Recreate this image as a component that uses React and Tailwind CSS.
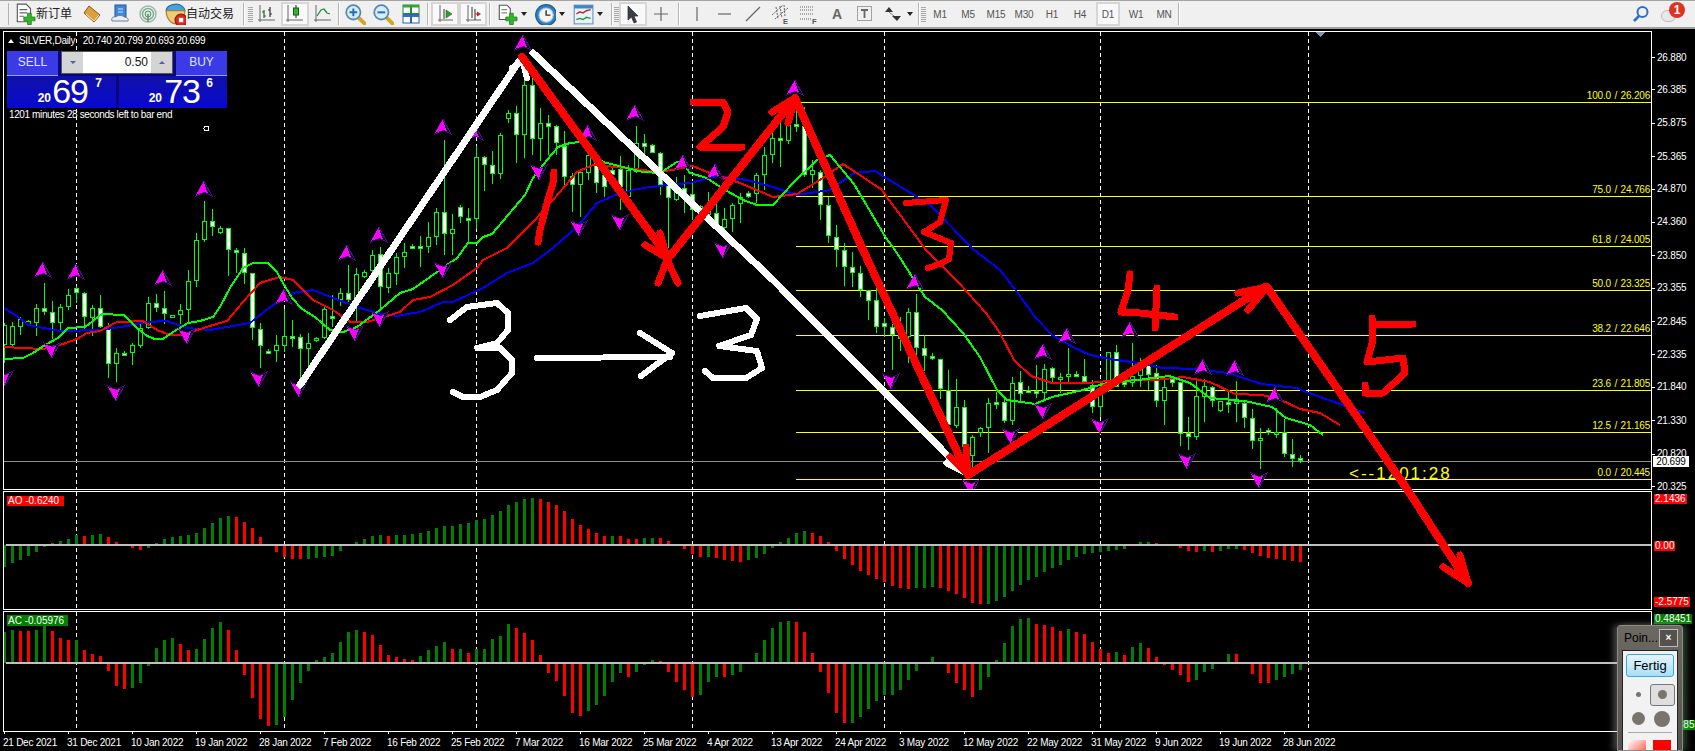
import React from "react";

/* ---------- price data, read as screen rows of the chart ---------- */
const scale = (y0, rows) => rows.map(([t, a, b, l, f]) => [y0 + t / 3, y0 + a / 3, y0 + b / 3, y0 + l / 3, f]);

const CANDLES = [
  ...scale(190, [
    [400,405,465,520,0],[395,408,465,470,0],[380,388,412,435,0],[390,392,405,408,0],[343,355,398,437,0],[280,355,365,375,1],
    [333,365,400,447,1],[343,352,400,425,0],[297,316,352,360,0],[287,295,310,340,1],[307,310,382,420,1],[345,355,383,437,0],
    [316,355,410,415,1],[400,415,523,563,1],[475,490,523,575,0],[483,488,494,498,1],[460,466,490,524,0],[403,415,468,473,0],
    [322,340,415,418,0],[312,340,355,367,1],[303,355,373,403,1],[376,376,382,382,0],[343,361,376,403,0],[240,274,361,398,0],
    [130,151,274,290,0],[34,94,151,155,0],[58,94,112,137,1],[109,115,130,133,0],[115,115,181,257,1],[175,181,190,250,1],
    [175,190,250,283,1],[250,250,415,450,1],[400,418,469,533,1],[477,482,488,491,1],[435,466,484,515,0],[358,439,469,485,0],
    [390,437,441,470,1],[433,440,478,565,1],[430,460,478,560,0],[442,445,451,455,0],[350,358,445,448,0],
  ]),
  ...scale(100, [
    [585,648,652,680,1],[565,580,600,618,0],[495,580,600,605,1],[503,523,605,670,0],[510,515,530,535,0],[450,465,512,520,0],
    [440,463,562,625,1],[505,520,563,580,0],[460,472,523,555,0],[430,455,472,503,0],[432,437,443,448,1],[408,438,442,500,1],
    [365,412,440,458,0],[325,335,412,435,0],
  ]),
  ...scale(40, [
    [300,515,583,645,1],[522,568,583,645,0],[495,502,530,548,1],[505,533,538,605,1],[317,352,538,568,0],[347,352,375,452,1],
    [332,375,403,432,1],[280,286,403,417,0],[210,220,238,250,0],[198,220,286,368,1],[110,135,286,355,0],[110,135,298,345,1],
    [205,250,298,363,0],[225,250,260,345,1],[255,258,310,345,1],[273,318,410,435,1],[398,408,436,515,1],[390,395,436,530,0],
    [340,345,398,420,0],[335,370,430,458,1],[370,405,442,470,1],[380,390,405,445,1],[348,388,442,510,1],[375,390,472,480,0],
    [258,310,395,400,0],[282,310,322,345,1],[312,316,338,340,1],[335,338,435,465,1],[430,435,475,625,1],[410,445,480,482,0],
    [405,445,475,520,1],[430,463,510,540,1],[495,497,503,530,0],[455,500,525,540,0],[490,518,565,570,1],[505,538,563,575,0],
    [490,495,538,575,0],[460,470,493,548,0],[452,460,470,475,1],[400,406,462,490,0],[320,345,406,450,0],[280,293,345,370,0],
    [250,293,297,380,1],[240,255,303,312,0],[210,252,258,275,1],[200,258,405,410,1],[360,390,405,445,0],[390,395,495,540,1],
    [470,495,588,610,1],
  ]),
  ...scale(250, [
    [-75,-40,0,50,1],[-20,0,52,107,1],[5,52,68,110,1],[48,68,120,140,1],[120,120,152,210,1],[100,150,230,248,1],
    [205,218,230,260,1],[222,230,256,360,1],[200,258,265,303,1],[175,187,262,340,0],[133,187,295,315,1],[255,293,318,362,1],
    [310,317,328,330,1],[328,328,418,447,1],[360,420,525,530,1],[388,472,527,535,0],[450,472,590,620,1],[555,562,617,650,0],
    [530,535,548,560,0],[445,460,535,610,0],[425,455,460,478,1],[445,455,512,520,1],[380,400,512,525,0],[363,397,433,460,1],
    [408,419,425,430,1],[345,422,430,445,1],[343,358,430,450,0],[352,355,385,400,1],[368,380,385,430,0],[295,371,380,395,0],
    [362,371,375,380,1],[328,377,397,400,1],[390,405,472,490,1],[400,420,470,500,0],
    [305,307,420,425,0],[285,307,410,412,1],[385,395,405,410,1],[280,377,400,412,0],[325,335,377,410,0],[335,345,375,420,1],
    [345,370,452,470,1],[385,412,452,525,0],[380,388,400,410,1],[395,397,553,587,1],[502,550,560,600,1],[388,438,560,570,0],
    [388,408,440,515,0],[408,410,452,470,1],[452,452,482,485,0],[420,455,460,488,1],[393,454,460,516,0],[455,460,505,535,1],
    [477,503,574,597,1],[535,565,574,657,0],[535,541,550,555,1],[475,545,550,565,0],[507,545,613,620,1],[568,613,627,650,1],
    [615,625,634,640,1],
  ]),
];

const GREEN = [[4,359],[23,358],[33,353],[45,345],[58,338],[68,328],[85,327],[102,314],[124,315],[137,328],[147,336],[155,339],[163,339],[173,332],[188,323],[200,321],[213,317],[220,307],[230,288],[243,268],[253,263],[268,263],[277,272],[283,283],[292,298],[302,309],[315,317],[330,330],[343,332],[357,327],[380,310],[400,293],[413,289],[440,270],[457,258],[468,243],[477,243],[483,237],[492,234],[525,195],[533,178],[547,160],[558,147],[570,143],[580,142],[597,157],[603,162],[643,172],[660,173],[677,162],[683,163],[690,173],[707,178],[720,187],[743,200],[757,205],[773,205],[793,183],[817,160],[830,155],[854,184],[886,238],[895,250],[911,275],[925,297],[942,310],[963,333],[980,357],[997,390],[1007,400],[1035,404],[1052,397],[1083,390],[1110,382],[1138,380],[1169,376],[1190,383],[1210,398],[1245,401],[1272,407],[1286,418],[1300,422],[1310,425],[1323,435]];
const RED = [[4,347],[23,348],[43,349],[63,344],[77,339],[87,333],[100,331],[117,322],[143,321],[157,330],[170,335],[183,335],[197,330],[213,325],[227,321],[243,302],[260,283],[280,277],[293,280],[313,300],[333,310],[350,322],[367,322],[400,312],[413,300],[430,297],[453,285],[477,268],[483,260],[507,248],[533,222],[553,200],[577,172],[593,165],[617,167],[660,172],[693,166],[707,172],[740,183],[773,197],[797,194],[820,180],[843,164],[881,189],[926,250],[959,283],[986,313],[1000,333],[1014,360],[1031,376],[1052,383],[1090,383],[1107,381],[1131,380],[1155,380],[1183,377],[1210,382],[1235,394],[1262,395],[1279,399],[1300,409],[1320,413],[1340,425]];
const BLUE = [[4,308],[17,316],[28,325],[60,331],[100,330],[127,326],[147,322],[167,321],[187,328],[210,330],[250,323],[270,307],[293,293],[313,290],[333,298],[360,308],[377,313],[397,316],[420,312],[443,302],[453,302],[483,288],[507,273],[533,263],[553,248],[577,227],[597,203],[620,193],[643,188],[667,185],[690,183],[717,176],[747,180],[773,187],[797,195],[830,190],[854,173],[875,171],[930,205],[973,249],[1000,270],[1017,292],[1035,317],[1052,335],[1073,347],[1090,355],[1110,359],[1138,363],[1162,368],[1197,369],[1228,373],[1262,384],[1296,388],[1320,397],[1337,403],[1365,413]];

const ARROWS_UP = [[43,270],[76,272],[163,278],[204,189],[284,297],[347,253],[379,235],[443,127],[475,133],[523,43],[588,133],[635,113],[683,163],[715,172],[795,88],[915,282],[1067,336],[1043,352],[1130,330],[1203,367],[1235,368],[1275,395]];
const ARROWS_DOWN = [[5,378],[52,350],[116,393],[187,336],[259,379],[299,389],[355,333],[380,319],[443,270],[539,172],[579,228],[620,222],[723,250],[891,381],[1043,411],[1011,436],[1100,426],[1187,461],[1259,480],[971,487]];

const FIBS = [["100.0", "26.206"],["75.0", "24.766"],["61.8", "24.005"],["50.0", "23.325"],["38.2", "22.646"],["23.6", "21.805"],["12.5", "21.165"],["0.0", "20.445"]];
const PRICE_TICKS = ["26.880","26.385","25.875","25.365","24.870","24.360","23.850","23.355","22.845","22.335","21.840","21.330","20.820","20.325"];
const priceY = (p) => 57.5 + (26.88 - parseFloat(p)) * 65.45;
const SEPARATORS = [76, 284, 476, 692, 884, 1100, 1308];
const DATES = ["21 Dec 2021","31 Dec 2021","10 Jan 2022","19 Jan 2022","28 Jan 2022","7 Feb 2022","16 Feb 2022","25 Feb 2022","7 Mar 2022","16 Mar 2022","25 Mar 2022","4 Apr 2022","13 Apr 2022","24 Apr 2022","3 May 2022","12 May 2022","22 May 2022","31 May 2022","9 Jun 2022","19 Jun 2022","28 Jun 2022"];

const AO = "-66g -55g -46g -34g -22g -6g 5g 11g 17g 29g 26r 29g 32g 23r 8r 0g -10r -15r -9g 5g 17g 23g 26g 29g 35g 50g 65g 80g 86g 83r 68r 50r 23r 0g -22r -37r -43r -43r -43g -40g -37g -34g -19g 0g 8g 17g 26g 29g 26r 29g 29g 32g 35g 41g 50g 56g 56g 62g 65g 74g 77g 89g 101g 119g 128g 137g 140g 137r 128r 119r 101r 77r 59r 47r 35r 26r 26g 26r 17r 17r 20g 20g 20r 11r 0g -12r -26r -36r -36g -39r -45r -48r -51r -45g -39g -27g -9g 8g 20g 35g 41g 35r 26r 8r -18r -42r -60r -78r -90r -102r -111r -123r -128r -132r -128g -128g -127g -129r -138r -147r -159r -174r -177r -177g -168g -156g -138g -120g -105g -96g -81g -69g -60g -45g -36g -27g -24g -21g -18g -15g -12g 0g 8g 8g 5r 0g 0g -9r -18r -21r -18g -21r -18g -12g -12g -15r -24r -33r -39r -42r -45r -48r -51r".split(" ");
const AC = "92g 98g 95r 95r 98g 110g 95r 74r 68r 68g 38r 26r 20r -24r -69r -78r -75g -60g -9g 44g 68g 74g 56r 38r 41g 71g 104g 122g 98r 38r -36r -105r -168r -189r -186g -162g -111g -60g -24g 8g 17g 29g 62g 92g 98g 92r 83r 53r 23r 17r 11r 8r 20g 38g 50g 62g 41r 41g 29r 41g 41g 71g 80g 116g 104r 89r 68r 23r -30r -54r -99r -150r -159r -144g -126g -99g -57g -30g -42r -27g -6g 8g 5r -27r -57r -81r -102r -96g -57g -42g -42r -36g -27g 0g 29g 68g 104g 122g 125g 122r 92r 29r -27r -90r -150r -180r -180g -162g -138g -114g -96g -96g -81g -51g -24g 0g 17g 0g -30r -60r -81r -102r -81g -42g 8g 59g 110g 131g 134g 116r 113r 107r 95r 101g 92r 86r 62r 41r 29r 32g 23r 47g 59g 44r 17r -6r -21r -36r -57r -51g -27g -18g 0g 26g 26r 0g -33r -60r -60r -51g -42g -33g -21g".split(" ");

const barX = (i) => 4.5 + 8 * i;
const pointsOf = (list) => list.map(([x, y]) => `${x},${y}`).join(" ");

/* ---------- toolbar pieces ---------- */
const Sep = ({ cls = "mx-[1px]" }) => <div className={`w-[2px] h-[22px] bg-[#b4b4b4] border-r border-white shrink-0 ${cls}`} />;
const Grip = () => (
  <div className="flex flex-col gap-[1px] w-[6px] h-[22px] shrink-0 justify-center items-center">
    {Array.from({ length: 8 }, (_, i) => <div key={i} className="w-[5px] h-[1px] bg-[#a8a8a8]" />)}
  </div>
);
const Slot = ({ children, on, w = "w-[28px]" }) => (
  <div className={`${w} h-[24px] shrink-0 flex items-center justify-center ${on ? "bg-[#f9f9f9] border-2 border-[#d6d6d6]" : ""}`}>{children}</div>
);
const Caret = ({ w = "w-[10px]" }) => (
  <div className={`${w} h-[24px] shrink-0 flex items-center justify-start`}>
    <div className="w-0 h-0 border-x-[3px] border-t-[4px] border-x-transparent border-t-[#222]" />
  </div>
);
const Tf = ({ label, on }) => (
  <Slot on={on} w={on ? "w-[24px] mx-[2px]" : "w-[28px]"}><span className="text-[10px] text-[#555] tracking-[-0.2px]">{label}</span></Slot>
);
const Ic = ({ children, s = 20 }) => <svg width={s} height={s} viewBox="0 0 20 20" fill="none">{children}</svg>;

const PlusGreen = ({ x = 7, y = 8 }) => (
  <path d={`M${x + 4} ${y}h4v4h4v4h-4v4h-4v-4h-4v-4h4z`} fill="#35b52f" stroke="#1b7a1a" strokeWidth="0.8" />
);
const NewOrderIcon = () => (
  <Ic s={22}>
    <path d="M3 1h8l4 4v12H3z" fill="#fff" stroke="#555" />
    <path d="M5 6h7M5 9h7M5 12h4" stroke="#666" />
    <g transform="scale(0.85) translate(3.5 3)"><PlusGreen /></g>
  </Ic>
);
const BookIcon = () => (
  <Ic><path d="M7 2l11 9-6 7L2 9z" fill="#dca03c" stroke="#8a5a16" /><path d="M4 10l8 7 5-6" stroke="#fce8b0" /></Ic>
);
const LibraryIcon = () => (
  <Ic>
    <rect x="5" y="1" width="11" height="12" fill="#3f87d8" stroke="#23558f" />
    <path d="M8 5h5M8 8h5" stroke="#cfe5ff" />
    <path d="M2 17c-1-3 1-5 4-4 1-2 7-2 8 0 3 0 5 2 4 4z" fill="#e6eef6" stroke="#6d8199" />
  </Ic>
);
const SignalIcon = () => (
  <Ic>
    <circle cx="10" cy="10" r="8" stroke="#9fb8a8" strokeWidth="1.5" />
    <circle cx="10" cy="10" r="5.5" stroke="#7fb08e" strokeWidth="1.5" />
    <circle cx="10" cy="10" r="3" fill="#c9e7d2" stroke="#4b9a68" />
    <path d="M10 10v8" stroke="#708078" strokeWidth="1.5" />
  </Ic>
);
const AutoIcon = () => (
  <Ic s={22}>
    <path d="M2 7c0-4 5-6 9-6s8 3 8 6z" fill="#4aa0d8" stroke="#2a6f9e" />
    <path d="M2 7h17c0 7-3 12-8 12S2 14 2 7z" fill="#f0cc70" stroke="#a88030" />
    <circle cx="15.5" cy="15.5" r="5.5" fill="#d92a1c" stroke="#8d1510" />
    <rect x="13.5" y="13.5" width="4" height="4" fill="#fff" />
  </Ic>
);
const BarsIcon = () => (
  <Ic>
    <path d="M3 1v15h15" stroke="#666" /><path d="M1 16h2M3 18v-2" stroke="#666" />
    <path d="M7 6v8M5 8h2M7 12h2" stroke="#1f6a2a" strokeWidth="1.2" /><path d="M13 3v10M11 6h2M13 10h2" stroke="#333" strokeWidth="1.2" />
  </Ic>
);
const CandleIcon = () => (
  <Ic>
    <path d="M3 1v15h15" stroke="#666" /><path d="M1 16h2M3 18v-2" stroke="#666" />
    <path d="M11 1v13" stroke="#222" /><rect x="8.5" y="4" width="5" height="7" fill="#2fb52f" stroke="#14601c" />
  </Ic>
);
const LineIcon = () => (
  <Ic>
    <path d="M3 1v15h15" stroke="#666" /><path d="M1 16h2M3 18v-2" stroke="#666" />
    <path d="M4 12l4-6 3-1 3 4 3 1" stroke="#1f8a3c" strokeWidth="1.3" />
  </Ic>
);
const ZoomIcon = ({ minus }) => (
  <Ic s={22}>
    <path d="M13 13l6 6" stroke="#d4a520" strokeWidth="3.5" strokeLinecap="round" />
    <circle cx="8.5" cy="8.5" r="6.5" fill="#d6ecfa" stroke="#5a88a8" strokeWidth="1.6" />
    <path d={minus ? "M5 8.5h7" : "M5 8.5h7M8.5 5v7"} stroke="#1e6fc0" strokeWidth="1.8" />
  </Ic>
);
const TileIcon = () => (
  <Ic>
    <rect x="2" y="1" width="7.5" height="8.5" fill="#fff" stroke="#2a8a30" /><rect x="2" y="1" width="7.5" height="2.5" fill="#2fa83a" />
    <rect x="10.5" y="1" width="7.5" height="8.5" fill="#fff" stroke="#2a8a30" /><rect x="10.5" y="1" width="7.5" height="2.5" fill="#2fa83a" />
    <rect x="2" y="10.5" width="7.5" height="8.5" fill="#fff" stroke="#2a60b0" /><rect x="2" y="10.5" width="7.5" height="2.5" fill="#2b6fd0" />
    <rect x="10.5" y="10.5" width="7.5" height="8.5" fill="#fff" stroke="#2a60b0" /><rect x="10.5" y="10.5" width="7.5" height="2.5" fill="#2b6fd0" />
  </Ic>
);
const ScrollIcon = () => (
  <Ic>
    <path d="M5 1v15h13M3 16h2M5 18v-2" stroke="#666" />
    <path d="M9 5v10" stroke="#333" /><path d="M11 6l6 4-6 4z" fill="#2f9f2f" stroke="#1a6a1a" strokeWidth="0.6" />
  </Ic>
);
const ShiftIcon = () => (
  <Ic>
    <path d="M5 1v15h13M3 16h2M5 18v-2" stroke="#666" />
    <path d="M9 3v11M12 5v11" stroke="#333" /><path d="M18 10l-4-2.5v5z" fill="#c22" /><path d="M14 10h-2" stroke="#c22" />
  </Ic>
);
const TemplateIcon = () => (
  <Ic s={22}>
    <path d="M3 2h7l3 3v10H3z" fill="#fff" stroke="#555" /><path d="M5 6h5M5 9h5" stroke="#888" />
    <g transform="scale(0.85) translate(3.5 3)"><PlusGreen /></g>
  </Ic>
);
const ClockIcon = () => (
  <Ic s={22}>
    <circle cx="11" cy="11" r="9.5" fill="#2d7fc8" stroke="#1a5a92" />
    <circle cx="11" cy="11" r="6.5" fill="#f6f6ee" stroke="#9fc4e4" />
    <path d="M11 6.5V11h4" stroke="#333" strokeWidth="1.3" />
  </Ic>
);
const IndicatorIcon = () => (
  <Ic s={22}>
    <rect x="2" y="2" width="17" height="17" fill="#eaf3fb" stroke="#6a92b8" /><rect x="2" y="2" width="17" height="3" fill="#3d86cc" />
    <path d="M4 10l3-2 3 1 3-2 4-1" stroke="#c92a20" strokeWidth="1.3" /><path d="M4 15l3-1 3 1 3-2 4 1" stroke="#2a9a3a" strokeWidth="1.3" />
  </Ic>
);
const CursorIcon = () => <Ic><path d="M5 2v14l3.5-3 2.5 6 2.5-1-2.5-6H15z" fill="#3a3f45" stroke="#2a2d30" strokeWidth="0.7" /></Ic>;
const Gray = ({ d }) => <Ic><path d={d} stroke="#666" strokeWidth="1.2" /></Ic>;
const ChannelIcon = () => (
  <Ic>
    <path d="M1 11l11-10M4 15l13-11M5 3l2 12M9 2l2 12M13 1l1 11" stroke="#666" strokeWidth="1" strokeDasharray="2 1" />
    <text x="12" y="19.5" fontSize="7.5" fontWeight="700" fill="#555">E</text>
  </Ic>
);
const FiboIcon = () => (
  <Ic>
    <path d="M1 3h13M1 6h13M1 10h13M1 15h11" stroke="#666" strokeDasharray="1 1" />
    <text x="13" y="19.5" fontSize="7.5" fontWeight="700" fill="#555">F</text>
  </Ic>
);
const TextLabelIcon = () => (
  <Ic>
    <rect x="2.5" y="2.5" width="14" height="14" stroke="#555" strokeDasharray="1 1" />
    <path d="M6 6h7M9.5 6v8" stroke="#666" strokeWidth="1.8" />
  </Ic>
);
const ArrowsIcon = () => (
  <Ic>
    <path d="M2 8l4-5 4 5z" fill="#333" /><path d="M9 12l5 5 4-5z" fill="#333" /><path d="M6 8l5 4" stroke="#777" />
  </Ic>
);

function Toolbar() {
  return (
    <div className="h-[29px] shrink-0 bg-[#f0f0f0] border-t border-[#a4a4a4] border-b-2 border-b-[#a0a0a0] flex items-center pl-[8px] text-[#222]">
      <div className="w-[1px] h-[22px] bg-[#b4b4b4] shrink-0" />
      <div className="w-[69px] shrink-0 flex items-center pl-[5px]"><NewOrderIcon /><span className="text-[12px]">新订单</span></div>
      <Slot><BookIcon /></Slot><Slot><LibraryIcon /></Slot><Slot><SignalIcon /></Slot>
      <div className="w-[78px] shrink-0 flex items-center pl-[2px]"><AutoIcon /><span className="text-[12px]">自动交易</span></div>
      <Sep cls="ml-[3px] mr-[2px]" /><Grip />
      <Slot><BarsIcon /></Slot><Slot on><CandleIcon /></Slot><Slot><LineIcon /></Slot>
      <Sep cls="mx-[1px]" />
      <Slot><ZoomIcon /></Slot><Slot><ZoomIcon minus /></Slot><Slot><TileIcon /></Slot>
      <Sep cls="mx-[2px]" />
      <Slot on><ScrollIcon /></Slot><Slot on><ShiftIcon /></Slot>
      <Sep cls="mx-[2px]" />
      <Slot><TemplateIcon /></Slot><Caret /><Slot><ClockIcon /></Slot><Caret /><Slot><IndicatorIcon /></Slot><Caret />
      <Sep cls="ml-[4px] mr-[0px]" /><Grip />
      <Slot on><CursorIcon /></Slot><Slot><Gray d="M10 3v14M3 10h14" /></Slot>
      <Sep cls="mx-[3px]" />
      <Slot><Gray d="M10 3v14" /></Slot><Slot><Gray d="M3 10h13" /></Slot><Slot><Gray d="M3 17L17 3" /></Slot>
      <Slot><ChannelIcon /></Slot><Slot><FiboIcon /></Slot>
      <Slot><span className="text-[14px] font-bold text-[#666]">A</span></Slot><Slot><TextLabelIcon /></Slot>
      <Slot><ArrowsIcon /></Slot><Caret w="w-[6px]" />
      <Sep cls="ml-[5px] mr-[0px]" /><Grip />
      {["M1","M5","M15","M30","H1","H4"].map((t) => <Tf key={t} label={t} />)}
      <Tf label="D1" on /><Tf label="W1" /><Tf label="MN" />
      <Sep cls="ml-[0px]" />
      <div className="flex-1" />
      <svg width="18" height="18" viewBox="0 0 18 18" fill="none" className="mr-[11px]">
        <circle cx="10.5" cy="7" r="5" stroke="#2a6fc8" strokeWidth="2" /><path d="M7 11l-5 5" stroke="#2a6fc8" strokeWidth="2.6" />
      </svg>
      <div className="relative w-[26px] h-[24px] mr-[8px] shrink-0">
        <div className="absolute left-[0px] top-[8px] w-[15px] h-[12px] rounded-full bg-[#e8e8e8] border border-[#bdbdbd]" />
        <div className="absolute left-[8px] top-[0px] w-[16px] h-[16px] rounded-full bg-[#df3222] text-white text-[12px] font-bold leading-[16px] text-center">1</div>
      </div>
    </div>
  );
}

/* ---------- one-click trading panel ---------- */
function Quote({ big, tail, cls, bigRight }) {
  return (
    <div className={`relative h-[32px] bg-gradient-to-b from-[#1010a8] to-[#0808d0] text-white ${cls}`}>
      <span className="absolute right-[65px] bottom-[4px] text-[12px] font-bold leading-none">20</span>
      <span className={`absolute top-[-2px] text-[34px] leading-[34px] tracking-[-1px] ${bigRight}`}>{big}</span>
      <span className="absolute right-[14px] top-[1px] text-[12px] font-bold leading-none">{tail}</span>
    </div>
  );
}

function TradePanel() {
  return (
    <div className="absolute left-[3px] top-[19px] w-[220px] bg-[#08087c]">
      <div className="flex justify-between">
        <div className="w-[51px] h-[25px] bg-[#3a3ae6] text-[#dfe6ff] text-[12px] text-center leading-[23px] border-b border-[#9aa4f4]">SELL</div>
        <div className="w-[112px] h-[23px] flex bg-white border border-[#555]">
          <div className="w-[21px] bg-[#d4d4d4] flex items-center justify-center"><div className="w-0 h-0 border-x-[3px] border-t-[3px] border-x-transparent border-t-[#5060a8]" /></div>
          <div className="flex-1 text-right pr-[3px] text-[12px] leading-[21px] text-[#111]">0.50</div>
          <div className="w-[21px] bg-[#d4d4d4] flex items-center justify-center"><div className="w-0 h-0 border-x-[3px] border-b-[3px] border-x-transparent border-b-[#5060a8]" /></div>
        </div>
        <div className="w-[51px] h-[25px] bg-[#3a3ae6] text-[#dfe6ff] text-[12px] text-center leading-[23px] border-b border-[#9aa4f4]">BUY</div>
      </div>
      <div className="flex justify-between">
        <Quote big="69" tail="7" cls="w-[109px]" bigRight="right-[28px]" />
        <Quote big="73" tail="6" cls="w-[108px]" bigRight="right-[27px]" />
      </div>
    </div>
  );
}

/* ---------- chart drawing ---------- */
function Separators({ y1, y2 }) {
  return SEPARATORS.map((x) => (
    <line key={x} x1={x + 0.5} x2={x + 0.5} y1={y1} y2={y2} stroke="#fff" strokeDasharray="4 3" />
  ));
}

function Fractal({ x, y, down }) {
  return (
    <g transform={`translate(${x} ${y}) scale(1 ${down ? -1 : 1})`}>
      <polygon points="0,-8 -8,7 0,3 8,7" fill="#000" stroke="#4a0a9a" strokeWidth="1" />
      <polygon points="0,-8 -8,6 0,3 4,4 1,-3" fill="#ff00ff" />
    </g>
  );
}

function MainChart() {
  return (
    <svg className="absolute inset-0 w-full h-full" viewBox="4 32 1647 457" shapeRendering="crispEdges">
      <Separators y1={32} y2={489} />
      {FIBS.map(([k, p]) => {
        const y = Math.round(priceY(p)) + 0.5;
        return <line key={k} x1="796" x2="1651" y1={y} y2={y} stroke="#ffff00" />;
      })}
      <line x1="4" x2="1651" y1="461.5" y2="461.5" stroke="#8a8f96" />
      {CANDLES.map(([t, a, b, l, f], i) => {
        const cx = barX(i);
        const top = Math.round(a);
        const h = Math.max(3, Math.round(b) - top);
        return (
          <g key={i}>
            <rect x={cx - 0.5} y={t} width="1" height={l - t} fill="#00ff00" />
            <rect x={cx - 2.5} y={top} width="5" height={h} fill="#00ff00" />
            <rect x={cx - 1.5} y={top + 1} width="3" height={h - 2} fill={f ? "#fff" : "#000"} />
          </g>
        );
      })}
      <polyline points={pointsOf(BLUE)} fill="none" stroke="#0000ff" strokeWidth="2" />
      <polyline points={pointsOf(RED)} fill="none" stroke="#ff0000" strokeWidth="2" />
      <polyline points={pointsOf(GREEN)} fill="none" stroke="#00ff00" strokeWidth="2" />
      {ARROWS_UP.map(([x, y]) => <Fractal key={`${x}-${y}`} x={x} y={y} />)}
      {ARROWS_DOWN.map(([x, y]) => <Fractal key={`${x}-${y}`} x={x} y={y} down />)}
      <circle cx="206.5" cy="128.5" r="2.5" fill="none" stroke="#fff" />
      <polygon points="1316,32 1325,32 1320.5,37" fill="#8497a8" />
    </svg>
  );
}

function Histogram({ data, zero, top, bottom }) {
  return (
    <svg className="absolute inset-0 w-full h-full" viewBox={`4 ${top} 1647 ${bottom - top}`} shapeRendering="crispEdges">
      <Separators y1={top} y2={bottom} />
      {data.map((tok, i) => {
        const v = parseInt(tok, 10);
        if (!v) return null;
        const h = Math.round(Math.abs(v) / 3);
        return (
          <rect key={i} x={barX(i) - 1.5} y={v > 0 ? zero - h : zero} width="3" height={h}
            fill={tok.endsWith("g") ? "#008000" : "#ff0000"} />
        );
      })}
      <rect x="6" y={zero - 1} width="1645" height="2" fill="#c0c0c0" />
    </svg>
  );
}

/* Hand drawn markup that sits over the whole chart area */
function Pen({ pts, c, w = 6 }) {
  return <polyline points={pointsOf(pts)} fill="none" stroke={c} strokeWidth={w} strokeLinecap="round" strokeLinejoin="round" />;
}

function Markup() {
  const W = "#ffffff";
  const R = "#ff0000";
  return (
    <svg className="absolute left-0 top-0 pointer-events-none" width="1695" height="751" viewBox="0 0 1695 751" shapeRendering="crispEdges">
      <Pen c={W} w={7} pts={[[300,385],[520,60]]} />
      <Pen c={W} w={6} pts={[[512,68],[522,60],[527,78]]} />
      <Pen c={W} w={7} pts={[[533,53],[773,280],[955,463]]} />
      <Pen c={W} w={7} pts={[[947,463],[965,472]]} />
      <Pen c={W} w={6} pts={[[450,320],[467,307],[497,303],[508,313],[508,330],[497,343],[477,348],[500,348],[512,360],[512,373],[497,390],[480,397],[463,397],[453,392]]} />
      <Pen c={W} w={6} pts={[[537,358],[670,357]]} />
      <Pen c={W} w={6} pts={[[640,333],[672,353],[641,376]]} />
      <Pen c={W} w={6} pts={[[700,316],[746,308],[757,319],[751,335],[719,346],[757,351],[762,368],[746,378],[713,378],[705,371]]} />

      <Pen c={R} w={8} pts={[[522,57],[665,253]]} />
      <Pen c={R} w={7} pts={[[645,245],[667,258],[660,233]]} />
      <Pen c={R} w={7} pts={[[667,260],[658,283]]} />
      <Pen c={R} w={7} pts={[[667,260],[678,283]]} />
      <Pen c={R} w={8} pts={[[667,260],[795,98]]} />
      <Pen c={R} w={7} pts={[[772,112],[795,98],[788,123]]} />
      <Pen c={R} w={8} pts={[[795,98],[863,250],[968,475]]} />
      <Pen c={R} w={7} pts={[[950,457],[968,475],[966,447]]} />
      <Pen c={R} w={8} pts={[[968,475],[1265,287]]} />
      <Pen c={R} w={7} pts={[[1238,293],[1267,287],[1248,310]]} />
      <Pen c={R} w={8} pts={[[1267,287],[1407,489],[1468,583]]} />
      <Pen c={R} w={7} pts={[[1443,567],[1468,583],[1460,555]]} />

      <Pen c={R} w={7} pts={[[554,172],[553,183],[547,203],[540,230],[538,242]]} />
      <Pen c={R} w={7} pts={[[693,102],[723,102],[728,112],[723,127],[700,147],[742,147]]} />
      <Pen c={R} w={6} pts={[[906,203],[946,200],[940,222],[924,232],[951,243],[949,259],[942,263],[928,268]]} />
      <Pen c={R} w={7} pts={[[1130,274],[1128,290],[1121,312],[1140,313],[1175,317]]} />
      <Pen c={R} w={7} pts={[[1157,288],[1155,328]]} />
      <Pen c={R} w={7} pts={[[1413,324],[1372,325],[1372,318],[1373,340],[1367,362],[1403,358],[1405,373],[1383,393],[1365,393],[1365,385]]} />
    </svg>
  );
}

/* ---------- panes ---------- */
const Pane = ({ cls, children }) => (
  <div className={`relative w-[1649px] border border-white bg-black overflow-hidden shrink-0 ${cls}`}>{children}</div>
);
const AxisBadge = ({ cls, children }) => (
  <div className={`absolute h-[10px] leading-[10px] px-[1px] text-[10px] text-white ${cls}`}>{children}</div>
);
const PaneRow = ({ children, axis, cls }) => (
  <div className={`flex pl-[3px] shrink-0 ${cls}`}>
    {children}
    <div className="relative flex-1">{axis}</div>
  </div>
);

function PointDialog() {
  return (
    <div className="absolute left-[1617px] top-[625px] w-[66px] h-[126px] overflow-hidden rounded-t-[3px] bg-gradient-to-b from-[#6c6963] to-[#55524d] border border-[#8c8a85] shadow-[-4px_0_6px_rgba(190,190,190,0.35),4px_0_6px_rgba(140,200,140,0.3)]">
      <div className="flex items-center h-[24px] pl-[6px]">
        <span className="flex-1 text-[12px] text-black">Poin...</span>
        <div className="w-[19px] h-[18px] mr-[4px] border border-[#bbb] bg-[#55524d] text-white text-[10px] leading-[15px] text-center font-bold">×</div>
      </div>
      <div className="mx-[4px] h-[110px] bg-[#f2f2f2] border border-[#222] pt-[3px]">
        <div className="mx-[3px] h-[23px] rounded-[3px] border border-[#38a9e0] bg-gradient-to-b from-[#e6f6fd] to-[#a8def6] text-[13px] leading-[21px] text-center text-black">Fertig</div>
        <div className="grid grid-cols-2 mt-[4px] mx-[3px] h-[48px] items-center justify-items-center">
          <div className="w-[5px] h-[5px] rounded-full bg-[#7a756c]" />
          <div className="w-[25px] h-[22px] rounded-[3px] border border-[#777] bg-[#dedede] flex items-center justify-center"><div className="w-[9px] h-[9px] rounded-full bg-[#7a756c]" /></div>
          <div className="w-[13px] h-[13px] rounded-full bg-[#7a756c]" />
          <div className="w-[16px] h-[16px] rounded-full bg-[#7a756c]" />
        </div>
        <div className="mx-[5px] mt-[3px] h-[1px] bg-[#aaa]" />
        <div className="flex gap-[7px] ml-[5px] mt-[7px]">
          <div className="w-[18px] h-[14px] bg-gradient-to-br from-[#ffffff] to-[#ff4040]" />
          <div className="w-[18px] h-[14px] bg-[#ff0000]" />
        </div>
      </div>
    </div>
  );
}

export default function App() {
  return (
    <div className="relative w-[1695px] h-[751px] bg-black overflow-hidden flex flex-col font-['Liberation_Sans','Noto_Sans_CJK_SC',sans-serif]">
      <Toolbar />
      <div className="h-[2px] shrink-0" />
      <PaneRow
        axis={
          <>
            {PRICE_TICKS.map((p) => (
              <div key={p} className="absolute left-0 flex items-center h-[10px]" style={{ top: priceY(p) - 36 }}>
                <div className="w-[3px] h-[1px] bg-white mr-[2px]" />
                <span className="text-[10px] leading-[10px] text-white tracking-[-0.2px]">{p}</span>
              </div>
            ))}
            <div className="absolute left-[1px] top-[425px] w-[36px] h-[11px] bg-white text-black text-[10px] leading-[11px] text-center tracking-[-0.2px]">20.699</div>
          </>
        }
      >
        <Pane cls="h-[459px]">
          <MainChart />
          <div className="absolute left-[4px] top-[3px] flex items-center h-[12px] text-white text-[10px] leading-none tracking-[-0.3px] whitespace-pre">
            <div className="w-0 h-0 border-x-[3px] border-b-[4px] border-x-transparent border-b-white mr-[5px]" />
            <span>SILVER,Daily   20.740 20.799 20.693 20.699</span>
          </div>
          <TradePanel />
          <div className="absolute left-[5px] top-[77px] text-white text-[10px] leading-[12px] whitespace-pre tracking-[-0.38px]">1201 minutes 28 seconds left to bar end</div>
          {FIBS.map(([k, p]) => (
            <div key={k} className="absolute right-[1px] text-[10px] leading-[11px] text-[#ffff00] whitespace-pre tracking-[-0.2px] [word-spacing:1px]" style={{ top: Math.round(priceY(p)) - 44 }}>
              {`${k} / ${p}`}
            </div>
          ))}
          <div className="absolute left-[1345px] top-[433px] text-[17px] leading-[17px] text-[#ffff00] whitespace-pre tracking-[2px]">{"<--1201:28"}</div>
        </Pane>
      </PaneRow>
      <div className="h-[1px] shrink-0" />
      <PaneRow
        axis={
          <>
            <AxisBadge cls="left-[2px] top-[3px] bg-[#ff0000]">2.1436</AxisBadge>
            <AxisBadge cls="left-[2px] top-[50px] bg-[#ff0000]">0.00</AxisBadge>
            <AxisBadge cls="left-[2px] top-[106px] bg-[#ff0000]">-2.5775</AxisBadge>
          </>
        }
      >
        <Pane cls="h-[119px]">
          <Histogram data={AO} zero={545} top={492} bottom={609} />
          <div className="absolute left-[3px] top-[4px] w-[57px] h-[10px] bg-[#ff0000] text-white text-[10px] leading-[10px] pl-[1px]">AO -0.6240</div>
        </Pane>
      </PaneRow>
      <div className="h-[1px] shrink-0" />
      <PaneRow
        axis={
          <>
            <AxisBadge cls="left-[2px] top-[3px] bg-[#008000]">0.48451</AxisBadge>
            <AxisBadge cls="left-[2px] top-[109px] bg-[#008000]">-0.56385</AxisBadge>
          </>
        }
      >
        <Pane cls="h-[121px]">
          <Histogram data={AC} zero={663} top={612} bottom={731} />
          <div className="absolute left-[3px] top-[3px] w-[61px] h-[11px] bg-[#008000] text-white text-[10px] leading-[11px] pl-[1px]">AC -0.05976</div>
        </Pane>
      </PaneRow>
      <div className="relative flex-1 flex pl-[3px]">
        {DATES.map((d) => (
          <div key={d} className="w-[64px] shrink-0 relative">
            <div className="absolute left-[1px] top-[-1px] w-[1px] h-[3px] bg-white" />
            <span className="absolute left-0 top-[5px] text-[10px] leading-[11px] text-white whitespace-pre tracking-[-0.25px]">{d}</span>
          </div>
        ))}
      </div>
      <Markup />
      <PointDialog />
    </div>
  );
}
